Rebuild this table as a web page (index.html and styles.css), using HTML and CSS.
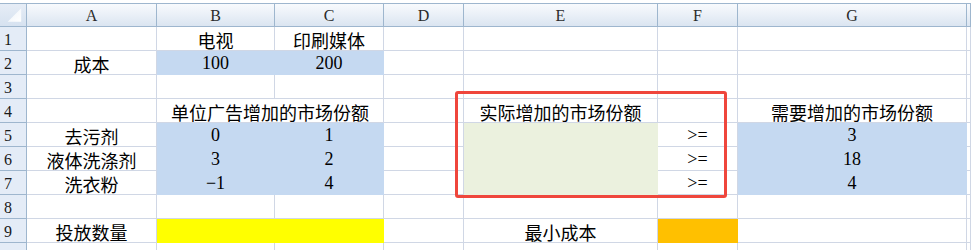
FILE: index.html
```html
<!DOCTYPE html>
<html lang="zh-CN">
<head>
<meta charset="utf-8">
<title>Sheet</title>
<link rel="stylesheet" href="styles.css">
</head>
<body>
<div class="wrap">
  <div class="sheet">
    <div class="corner"><svg width="27" height="24" viewBox="0 0 27 24"><defs><linearGradient id="tg" x1="0" y1="0" x2="1" y2="1"><stop offset="0" stop-color="#eef3f9"/><stop offset="1" stop-color="#ffffff"/></linearGradient></defs><polygon points="22,5 22,19 8,19" fill="url(#tg)"/></svg></div>
    <div class="ch">A</div><div class="ch">B</div><div class="ch">C</div><div class="ch">D</div><div class="ch">E</div><div class="ch">F</div><div class="ch">G</div><div class="ch"></div>

    <div class="rh">1</div><div class="c"></div><div class="c">电视</div><div class="c">印刷媒体</div><div class="c"></div><div class="c"></div><div class="c"></div><div class="c"></div><div class="c"></div>

    <div class="rh">2</div><div class="c">成本</div><div class="c blue">100</div><div class="c blue">200</div><div class="c"></div><div class="c"></div><div class="c"></div><div class="c"></div><div class="c"></div>

    <div class="rh">3</div><div class="c"></div><div class="c"></div><div class="c"></div><div class="c"></div><div class="c"></div><div class="c"></div><div class="c"></div><div class="c"></div>

    <div class="rh">4</div><div class="c"></div><div class="c span2">单位广告增加的市场份额</div><div class="c"></div><div class="c">实际增加的市场份额</div><div class="c"></div><div class="c">需要增加的市场份额</div><div class="c"></div>

    <div class="rh">5</div><div class="c">去污剂</div><div class="c blue">0</div><div class="c blue">1</div><div class="c"></div><div class="c green"></div><div class="c">&gt;=</div><div class="c blue">3</div><div class="c"></div>

    <div class="rh">6</div><div class="c">液体洗涤剂</div><div class="c blue">3</div><div class="c blue">2</div><div class="c"></div><div class="c green"></div><div class="c">&gt;=</div><div class="c blue">18</div><div class="c"></div>

    <div class="rh">7</div><div class="c">洗衣粉</div><div class="c blue">−1</div><div class="c blue">4</div><div class="c"></div><div class="c green"></div><div class="c">&gt;=</div><div class="c blue">4</div><div class="c"></div>

    <div class="rh">8</div><div class="c"></div><div class="c"></div><div class="c"></div><div class="c"></div><div class="c"></div><div class="c"></div><div class="c"></div><div class="c"></div>

    <div class="rh">9</div><div class="c">投放数量</div><div class="c yellow"></div><div class="c yellow"></div><div class="c"></div><div class="c">最小成本</div><div class="c orange"></div><div class="c"></div><div class="c"></div>

    <div class="rh"></div><div class="c"></div><div class="c"></div><div class="c"></div><div class="c"></div><div class="c"></div><div class="c"></div><div class="c"></div><div class="c"></div>
  </div>
  <div class="highlight"></div>
</div>
</body>
</html>
```

FILE: styles.css
```css
html, body {
  margin: 0;
  padding: 0;
  background: #ffffff;
  overflow: hidden;
}

.wrap {
  position: relative;
  width: 971px;
  height: 250px;
  padding-top: 3px;
  box-sizing: border-box;
  overflow: hidden;
}

.sheet {
  display: grid;
  grid-template-columns: 27px 130px 118px 109px 80px 194px 80px 229px 1fr;
  grid-template-rows: 24px repeat(10, 24px);
  font-family: "Liberation Serif", "Noto Sans CJK SC", serif;
  font-size: 18px;
  color: #000;
}

.sheet > div {
  box-sizing: border-box;
  display: flex;
  align-items: center;
  justify-content: center;
  white-space: nowrap;
  overflow: hidden;
}

.corner {
  background: linear-gradient(#e6edf6, #d6e2f0);
  border-top: 1px solid #9eb6ce;
  border-right: 1px solid #9eb6ce;
  border-bottom: 1px solid #9eb6ce;
}

.corner svg {
  display: block;
}

.ch {
  background: linear-gradient(#f8fafd, #dbe5f1);
  border-top: 1px solid #9eb6ce;
  border-right: 1px solid #9eb6ce;
  border-bottom: 1px solid #9eb6ce;
  font-family: "Liberation Serif", serif;
  font-size: 16px;
  color: #2a2a2a;
  padding-top: 1px;
}

.rh {
  background: #e4ecf7;
  border-right: 1px solid #9eb6ce;
  border-bottom: 1px solid #9eb6ce;
  justify-content: flex-start !important;
  padding-left: 4px;
  font-family: "Liberation Serif", serif;
  font-size: 16px;
  color: #1a1a1a;
  padding-top: 2px;
}

.c {
  border-right: 1px solid #d0d7e5;
  border-bottom: 1px solid #d0d7e5;
  padding-top: 2px;
}

.span2 {
  grid-column: span 2;
}

.blue {
  background: #c5d9f1;
  border-color: transparent;
}

.green {
  background: #ebf1de;
  border-color: transparent;
}

.yellow {
  background: #ffff00;
  border-color: transparent;
}

.orange {
  background: #ffc000;
  border-color: transparent;
}

.highlight {
  position: absolute;
  left: 455px;
  top: 91px;
  width: 272px;
  height: 107px;
  box-sizing: border-box;
  border: 3px solid #ef463c;
  border-radius: 3px;
}
```
